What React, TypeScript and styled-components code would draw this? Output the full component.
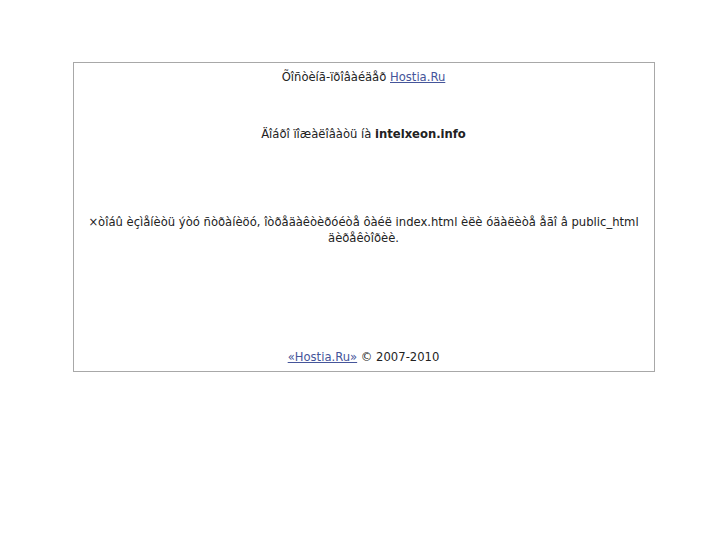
import React from 'react'
import styled, { createGlobalStyle } from 'styled-components'

const GlobalStyle = createGlobalStyle`
  body {
    margin: 8px;
    background: #ffffff;
    font-family: "DejaVu Sans", Verdana, sans-serif;
    font-size: 11.6px;
    color: #222222;
  }
`

const Box = styled.div`
  width: 582px;
  margin: 54px auto 0;
  border: 1px solid #a8a8a8;
  box-sizing: border-box;
  padding: 6px 10px 6px;
  display: flex;
  flex-direction: column;
  align-items: center;
  text-align: center;
  line-height: 16px;
`

const Line = styled.div<{ $gap?: number }>`
  margin-top: ${(p) => p.$gap ?? 0}px;
`

const Link = styled.a`
  color: #45559a;
  text-decoration: underline;
`

export default function App() {
  return (
    <>
      <GlobalStyle />
      <Box>
        <Line>
          Õîñòèíã-ïðîâàéäåð <Link href="#">Hostia.Ru</Link>
        </Line>
        <Line $gap={41}>
          Äîáðî ïîæàëîâàòü íà <b>intelxeon.info</b>
        </Line>
        <Line $gap={72}>
          ×òîáû èçìåíèòü ýòó ñòðàíèöó, îòðåäàêòèðóéòå ôàéë index.html èëè óäàëèòå åãî â public_html
          äèðåêòîðèè.
        </Line>
        <Line $gap={103}>
          <Link href="#">«Hostia.Ru»</Link> © 2007-2010
        </Line>
      </Box>
    </>
  )
}
